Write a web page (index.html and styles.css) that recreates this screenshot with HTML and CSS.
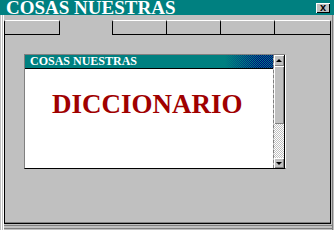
FILE: index.html
```html
<!DOCTYPE html>
<html>
<head>
<meta charset="utf-8">
<link rel="stylesheet" href="styles.css">
</head>
<body>
<div class="win">
  <div class="titlebar">
    <span class="title">COSAS NUESTRAS</span>
    <div class="close">x</div>
  </div>
  <div class="frame">
    <div class="tabs">
      <div class="tab first"></div>
      <div class="tab sel"></div>
      <div class="tab t3"></div>
      <div class="tab mid"></div>
      <div class="tab mid"></div>
      <div class="tab last"></div>
    </div>
    <div class="panel">
      <div class="child">
        <div class="main">
          <div class="ctitle">
            <span class="ctext">COSAS NUESTRAS</span>
            <div class="dither"></div>
          </div>
          <div class="content">
            <div class="dict">DICCIONARIO</div>
          </div>
        </div>
        <div class="scroll">
          <div class="sbtn up"><span class="arrow-up"></span></div>
          <div class="thumb"></div>
          <div class="track"></div>
          <div class="sbtn down"><span class="arrow-down"></span></div>
        </div>
      </div>
    </div>
  </div>
</div>
</body>
</html>
```
FILE: styles.css
```css
* { box-sizing: border-box; margin: 0; padding: 0; }
body {
  width: 334px; height: 230px; overflow: hidden;
  background: #c0c0c0;
  font-family: "Liberation Serif", "Times New Roman", serif;
}
.win { display: flex; flex-direction: column; width: 334px; height: 230px; }
.titlebar {
  height: 15px; background: #008080;
  display: flex; align-items: flex-start; padding-left: 6px;
}
.title {
  flex: 1; color: #fff; font-weight: bold; font-size: 19px; line-height: 15px;
  white-space: nowrap;
}
.close {
  width: 14px; height: 10px; margin: 3px 4px 0 0;
  background: #c0c0c0;
  box-shadow: inset 1px 1px #fff, inset -1px -1px #000;
  font-family: "Liberation Sans", Arial, sans-serif; font-weight: bold;
  font-size: 11px; line-height: 8px; text-align: center; color: #000;
}
.frame {
  flex: 1; display: flex; flex-direction: column;
  padding: 5px 3px 6px 4px;
  box-shadow:
    inset 1px 0 #c0c0c0, inset 2px 0 #fff, inset 3px 0 #c0c0c0, inset 4px 0 #fff,
    inset -1px 0 #c0c0c0, inset -2px 0 #808080,
    inset 0 -1px #c0c0c0, inset 0 -2px #808080, inset 0 -4px #c0c0c0, inset 0 -5px #808080;
}
.tabs { display: flex; height: 15px; }
.tab {
  height: 15px; background: #c0c0c0;
  border-top: 1px solid #fff; border-right: 1px solid #000; border-bottom: 1px solid #000;
  border-top-right-radius: 2px;
}
.tab.first { width: 56px; border-left: 1px solid #000; border-top-left-radius: 2px; }
.tab.sel { width: 52px; border: none; }
.tab.t3 { width: 55px; border-left: 1px solid #000; border-top-left-radius: 2px; }
.tab.mid { width: 54px; }
.tab.last { width: 56px; }
.panel {
  flex: 1;
  border-left: 1px solid #000; border-right: 1px solid #000; border-bottom: 1px solid #000;
  box-shadow: inset 0 -1px #808080;
  padding: 19px 0 0 19px;
}
.child {
  width: 262px; height: 115px; display: flex;
  border-top: 1px solid #808080; border-left: 1px solid #808080;
  border-right: 1px solid #fff; border-bottom: 1px solid #000;
}
.main { width: 248px; display: flex; flex-direction: column; }
.ctitle {
  height: 14px; background: #008080; border-bottom: 1px solid #000;
  display: flex; padding-left: 5px;
}
.ctext {
  color: #fff; font-weight: bold; font-size: 12px; line-height: 13px; white-space: nowrap;
}
.dither {
  margin-left: auto; width: 48px; height: 13px;
  background: repeating-conic-gradient(#000080 0 25%, #0000c8 0 35%, transparent 0 50%) 0 0 / 2px 2px;
  -webkit-mask-image: linear-gradient(to right, transparent, #000 70%);
  mask-image: linear-gradient(to right, transparent, #000 70%);
}
.content { flex: 1; background: #fff; padding: 22px 0 0 27px; }
.dict {
  color: #a00000; font-weight: bold; font-size: 27px; line-height: 27px; white-space: nowrap;
}
.scroll {
  width: 12px; display: flex; flex-direction: column;
  border-left: 1px dashed #808080; border-right: 1px solid #000;
  background: #c0c0c0;
}
.sbtn {
  height: 11px; background: #c0c0c0;
  box-shadow: inset 1px 1px #fff, inset -1px -1px #808080;
  display: flex; align-items: center; justify-content: center;
}
.sbtn.down { height: 10px; }
.arrow-up {
  width: 0; height: 0;
  border-left: 3px solid transparent; border-right: 3px solid transparent;
  border-bottom: 3px solid #000;
}
.arrow-down {
  width: 0; height: 0;
  border-left: 3px solid transparent; border-right: 3px solid transparent;
  border-top: 3px solid #000;
}
.thumb {
  height: 58px; background: #c0c0c0;
  box-shadow: inset 1px 1px #fff, inset -1px -1px #808080;
}
.track {
  flex: 1;
  background: repeating-conic-gradient(#fff 0 25%, #c0c0c0 0 50%) 0 0 / 2px 2px;
}
```
